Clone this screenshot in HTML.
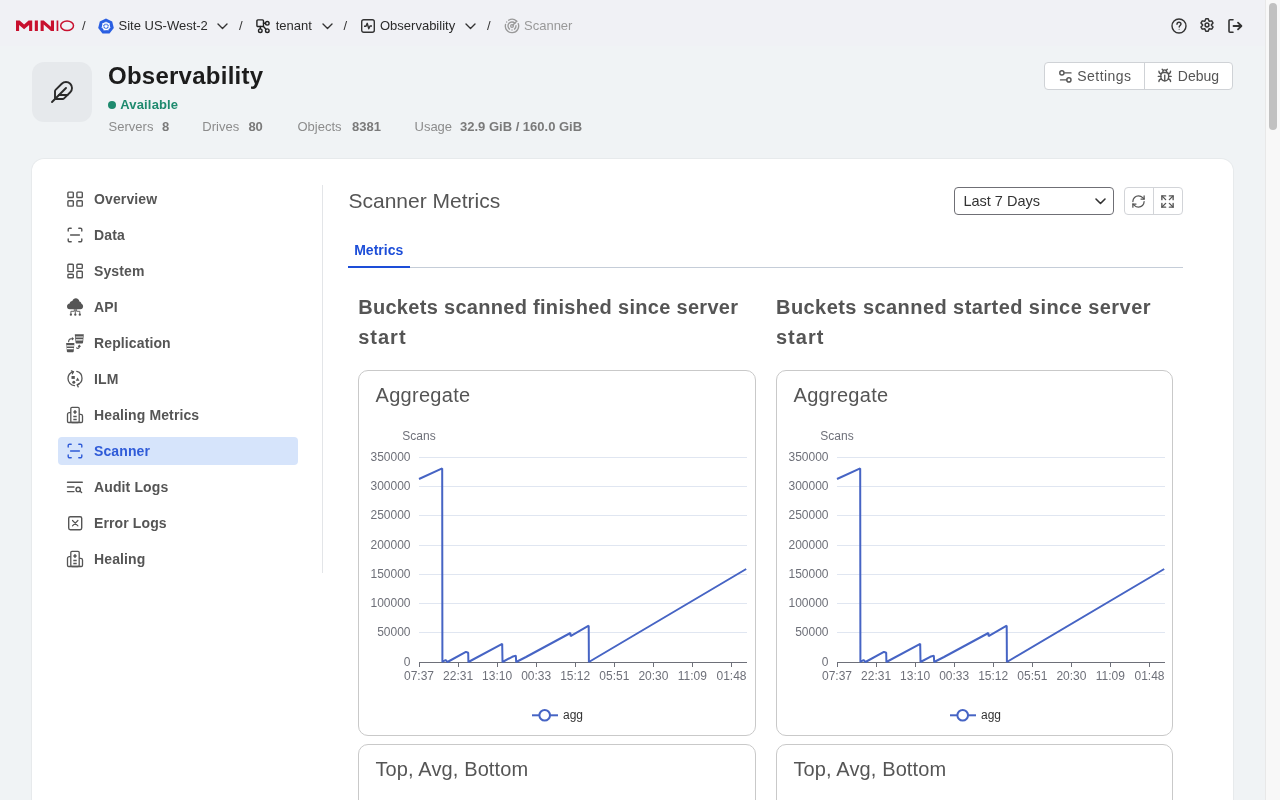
<!DOCTYPE html>
<html><head><meta charset="utf-8">
<style>
*{box-sizing:border-box;margin:0;padding:0}
html,body{width:1280px;height:800px;overflow:hidden;background:#f0f3f5;font-family:"Liberation Sans",sans-serif;}
.t{position:absolute;white-space:nowrap}
.a{position:absolute}
svg{position:absolute;overflow:visible}
svg text{font-family:"Liberation Sans",sans-serif}
#root{position:absolute;left:0;top:0;width:1280px;height:800px;overflow:hidden;will-change:transform;background:#f0f3f5}
</style></head><body><div id="root">
<div class="a" style="left:0;top:0;width:1265px;height:46px;background:#f0f1f5"></div>
<svg style="left:16px;top:20px" width="60" height="12" viewBox="0 0 60 12">
<path fill="#c8102e" d="M0 0.5H3.6L8.1 4.6L12.6 0.5H16.2V11H13.1V5L8.1 9.2L3.1 5V11H0Z"/>
<rect x="18.8" y="0.5" width="3.1" height="10.5" fill="#c8102e"/>
<path fill="#c8102e" d="M24.6 0.5H27.7L34.9 6.8V0.5H38V11H35L27.7 4.6V11H24.6Z"/>
<rect x="40.6" y="0.5" width="1.7" height="10.5" fill="#c8102e"/>
<ellipse cx="51.1" cy="5.75" rx="6.4" ry="4.65" fill="none" stroke="#c8102e" stroke-width="1.5"/>
</svg>
<div class="t" style="left:82px;top:19.00px;font-size:13px;line-height:13px;color:#333;">/</div>
<svg style="left:98px;top:18px" width="16" height="16" viewBox="0 0 16 16">
<path fill="#2a5fe2" d="M8 0.4L14.2 3.4L15.8 10.1L11.5 15.5H4.5L0.2 10.1L1.8 3.4Z"/>
<circle cx="8" cy="8.3" r="3.4" fill="none" stroke="#fff" stroke-width="1.2"/>
<circle cx="8" cy="8.3" r="1.1" fill="#fff"/>
<path stroke="#fff" stroke-width="0.8" d="M8 8.3L8.00 3.70 M8 8.3L11.60 5.43 M8 8.3L12.48 9.32 M8 8.3L10.00 12.44 M8 8.3L6.00 12.44 M8 8.3L3.52 9.32 M8 8.3L4.40 5.43"/>
</svg>
<div class="t" style="left:118.5px;top:19.00px;font-size:13px;line-height:13px;color:#2b2b2b;">Site US-West-2</div>
<svg style="left:216.5px;top:23px" width="11" height="6.5" viewBox="-1 -1 11 6.5"><path d="M0 0L4.5 4.5L9 0" fill="none" stroke="#333" stroke-width="1.4" stroke-linecap="round" stroke-linejoin="round"/></svg>
<div class="t" style="left:239px;top:19.00px;font-size:13px;line-height:13px;color:#333;">/</div>
<svg style="left:256px;top:19px" width="14" height="14" viewBox="0 0 14 14" fill="none" stroke="#222" stroke-width="1.4" stroke-linecap="round">
<rect x="0.9" y="0.9" width="6.6" height="6.6" rx="1"/>
<circle cx="11.3" cy="4.3" r="1.8"/>
<circle cx="4.3" cy="11.7" r="1.8"/>
<circle cx="11.3" cy="11.7" r="1.8"/>
<path d="M7.5 4.3H9.4M4.3 7.5V9.8M7.5 7.5L9.9 10.2"/>
</svg>
<div class="t" style="left:275.75px;top:19.00px;font-size:13px;line-height:13px;color:#2b2b2b;">tenant</div>
<svg style="left:321.5px;top:23px" width="11" height="6.5" viewBox="-1 -1 11 6.5"><path d="M0 0L4.5 4.5L9 0" fill="none" stroke="#333" stroke-width="1.4" stroke-linecap="round" stroke-linejoin="round"/></svg>
<div class="t" style="left:343.5px;top:19.00px;font-size:13px;line-height:13px;color:#333;">/</div>
<svg style="left:361px;top:19px" width="14" height="14" viewBox="0 0 14 14" fill="none" stroke="#333" stroke-width="1.4">
<rect x="0.7" y="0.7" width="12.6" height="12.6" rx="2"/>
<path d="M3 7.3H5L6.2 4.3L7.8 9.7L9 7H11" stroke-linejoin="round"/>
</svg>
<div class="t" style="left:380px;top:19.00px;font-size:13px;line-height:13px;color:#2b2b2b;">Observability</div>
<svg style="left:465px;top:23px" width="11" height="6.5" viewBox="-1 -1 11 6.5"><path d="M0 0L4.5 4.5L9 0" fill="none" stroke="#333" stroke-width="1.4" stroke-linecap="round" stroke-linejoin="round"/></svg>
<div class="t" style="left:487px;top:19.00px;font-size:13px;line-height:13px;color:#333;">/</div>
<svg style="left:503.5px;top:17.5px" width="16" height="16" viewBox="0 0 24 24" fill="none" stroke="#999" stroke-width="2" stroke-linecap="round" stroke-linejoin="round">
<path d="M19.07 4.93A10 10 0 0 0 6.99 3.34"/><path d="M4 6h.01"/><path d="M2.29 9.62A10 10 0 1 0 21.31 8.35"/>
<path d="M16.24 7.76A6 6 0 1 0 8.23 16.67"/><path d="M12 18h.01"/><path d="M17.99 11.66A6 6 0 0 1 15.77 16.67"/>
<circle cx="12" cy="12" r="2"/><path d="m13.41 10.59 5.66-5.66"/>
</svg>
<div class="t" style="left:524px;top:19.00px;font-size:13px;line-height:13px;color:#999;">Scanner</div>
<svg style="left:1171px;top:18px" width="16" height="16" viewBox="0 0 16 16" fill="none" stroke="#333" stroke-width="1.4">
<circle cx="8" cy="8" r="7"/>
<path d="M6 6.2C6 5 7 4.3 8 4.3C9.1 4.3 10 5 10 6.1C10 7.3 8.2 7.6 8.2 9" stroke-linecap="round"/>
<circle cx="8.1" cy="11.3" r="0.5" fill="#333" stroke="none"/>
</svg>
<svg style="left:1200px;top:18px" width="14" height="14" viewBox="0 0 14 14" fill="none" stroke="#333" stroke-width="1.5" stroke-linejoin="round">
<path d="M4.85 3.28 L5.80 0.82 L8.20 0.82 L9.15 3.28 L11.75 2.87 L12.96 4.95 L11.30 7.00 L12.96 9.05 L11.75 11.13 L9.15 10.72 L8.20 13.18 L5.80 13.18 L4.85 10.72 L2.25 11.13 L1.04 9.05 L2.70 7.00 L1.04 4.95 L2.25 2.87Z"/>
<circle cx="7" cy="7" r="1.9"/>
</svg>
<svg style="left:1226px;top:17px" width="18" height="18" viewBox="1226 17 18 18" fill="none" stroke="#333" stroke-width="1.6" stroke-linecap="round" stroke-linejoin="round">
<path d="M1233 19.8H1230A1 1 0 0 0 1229 20.8V31.2A1 1 0 0 0 1230 32.2H1233"/>
<path d="M1233.5 26H1241.2M1238 22.6L1241.4 26L1238 29.4" stroke-width="1.8"/>
</svg>
<div class="a" style="left:1265px;top:0;width:15px;height:800px;background:#f8f8f8;border-left:1px solid #e8e8e8"></div>
<div class="a" style="left:1269px;top:3px;width:8px;height:127px;background:#c1c1c1;border-radius:4px"></div>
<div class="a" style="left:32px;top:62px;width:60px;height:60px;background:#e6e9ec;border-radius:12px"></div>
<svg style="left:50px;top:80px" width="24" height="24" viewBox="0 0 24 24" fill="none" stroke="#2b2b2b" stroke-width="1.9" stroke-linecap="round" stroke-linejoin="round">
<path d="M12.67 19a2 2 0 0 0 1.416-.588l6.154-6.172a6 6 0 0 0-8.49-8.49L5.586 9.914A2 2 0 0 0 5 11.328V18a1 1 0 0 0 1 1z"/>
<path d="M16 8 2 22"/><path d="M17.5 15H9"/>
</svg>
<div class="t" style="left:108px;top:63.88px;font-size:24px;line-height:24px;color:#1c1c1c;font-weight:bold;letter-spacing:0.25px;">Observability</div>
<div class="a" style="left:108px;top:101px;width:8px;height:8px;border-radius:50%;background:#1e8a6e"></div>
<div class="t" style="left:120.3px;top:97.75px;font-size:13px;line-height:13px;color:#1e8a6e;font-weight:bold;letter-spacing:0.15px;">Available</div>
<div class="t" style="left:108.6px;top:120.00px;font-size:13px;line-height:13px;color:#8c8c8c;">Servers</div>
<div class="t" style="left:162px;top:120.00px;font-size:13px;line-height:13px;color:#7a7a7a;font-weight:bold;">8</div>
<div class="t" style="left:202.3px;top:120.00px;font-size:13px;line-height:13px;color:#8c8c8c;">Drives</div>
<div class="t" style="left:248.4px;top:120.00px;font-size:13px;line-height:13px;color:#7a7a7a;font-weight:bold;">80</div>
<div class="t" style="left:297.5px;top:120.00px;font-size:13px;line-height:13px;color:#8c8c8c;">Objects</div>
<div class="t" style="left:352px;top:120.00px;font-size:13px;line-height:13px;color:#7a7a7a;font-weight:bold;">8381</div>
<div class="t" style="left:414.5px;top:120.00px;font-size:13px;line-height:13px;color:#8c8c8c;">Usage</div>
<div class="t" style="left:460px;top:120.00px;font-size:13px;line-height:13px;color:#7a7a7a;font-weight:bold;">32.9 GiB / 160.0 GiB</div>
<div class="a" style="left:1044px;top:62px;width:189px;height:28px;border:1px solid #cfd2d6;border-radius:4px;background:#fff"></div>
<div class="a" style="left:1144px;top:62px;width:1px;height:28px;background:#cfd2d6"></div>
<svg style="left:1056.6px;top:67.7px" width="16.8" height="16.8" viewBox="0 0 24 24" fill="none" stroke="#555" stroke-width="2" stroke-linecap="round" stroke-linejoin="round">
<path d="M20 7h-9"/><path d="M14 17H5"/><circle cx="17" cy="17" r="3"/><circle cx="7" cy="7" r="3"/>
</svg>
<div class="t" style="left:1077.3px;top:69.25px;font-size:14px;line-height:14px;color:#555;letter-spacing:0.45px;">Settings</div>
<svg style="left:1157.25px;top:68px" width="15.5" height="15.5" viewBox="0 0 24 24" fill="none" stroke="#555" stroke-width="2.1" stroke-linecap="round" stroke-linejoin="round">
<path d="m8 2 1.88 1.88"/><path d="M14.12 3.88 16 2"/><path d="M9 7.13v-1a3.003 3.003 0 1 1 6 0v1"/>
<path d="M12 20c-3.3 0-6-2.7-6-6v-3a4 4 0 0 1 4-4h4a4 4 0 0 1 4 4v3c0 3.3-2.7 6-6 6"/><path d="M12 20v-9"/>
<path d="M6.53 9C4.6 8.8 3 7.1 3 5"/><path d="M6 13H2"/><path d="M3 21c0-2.1 1.7-3.9 3.8-4"/>
<path d="M20.97 5c0 2.1-1.6 3.8-3.5 4"/><path d="M22 13h-4"/><path d="M17.2 17c2.1.1 3.8 1.9 3.8 4"/>
</svg>
<div class="t" style="left:1177.8px;top:69.25px;font-size:14px;line-height:14px;color:#555;">Debug</div>
<div class="a" style="left:32px;top:159px;width:1201px;height:700px;background:#fff;border-radius:12px;box-shadow:0 0 0 1px rgba(0,0,0,0.035)"></div>
<div class="a" style="left:58px;top:437px;width:240px;height:28px;background:#d6e4fb;border-radius:4px"></div>
<div class="t" style="left:94px;top:192.15px;font-size:14px;line-height:14px;color:#555;font-weight:bold;letter-spacing:0.12px;">Overview</div>
<div class="t" style="left:94px;top:228.15px;font-size:14px;line-height:14px;color:#555;font-weight:bold;letter-spacing:0.12px;">Data</div>
<div class="t" style="left:94px;top:264.15px;font-size:14px;line-height:14px;color:#555;font-weight:bold;letter-spacing:0.12px;">System</div>
<div class="t" style="left:94px;top:300.15px;font-size:14px;line-height:14px;color:#555;font-weight:bold;letter-spacing:0.12px;">API</div>
<div class="t" style="left:94px;top:336.15px;font-size:14px;line-height:14px;color:#555;font-weight:bold;letter-spacing:0.12px;">Replication</div>
<div class="t" style="left:94px;top:372.15px;font-size:14px;line-height:14px;color:#555;font-weight:bold;letter-spacing:0.12px;">ILM</div>
<div class="t" style="left:94px;top:408.15px;font-size:14px;line-height:14px;color:#555;font-weight:bold;letter-spacing:0.12px;">Healing Metrics</div>
<div class="t" style="left:94px;top:444.15px;font-size:14px;line-height:14px;color:#2f5bd8;font-weight:bold;letter-spacing:0.12px;">Scanner</div>
<div class="t" style="left:94px;top:480.15px;font-size:14px;line-height:14px;color:#555;font-weight:bold;letter-spacing:0.12px;">Audit Logs</div>
<div class="t" style="left:94px;top:516.15px;font-size:14px;line-height:14px;color:#555;font-weight:bold;letter-spacing:0.12px;">Error Logs</div>
<div class="t" style="left:94px;top:552.15px;font-size:14px;line-height:14px;color:#555;font-weight:bold;letter-spacing:0.12px;">Healing</div>
<div class="a" style="left:322px;top:185px;width:1px;height:388px;background:#e3e5e8"></div>
<svg style="left:66px;top:190px" width="18" height="18" viewBox="0 0 18 18" fill="none" stroke="#555" stroke-width="1.4">
<rect x="1.9" y="2.1" width="5.4" height="5.4" rx="0.8"/><rect x="10.9" y="2.1" width="5.4" height="5.4" rx="0.8"/>
<rect x="1.9" y="10.7" width="5.4" height="5.4" rx="0.8"/><rect x="10.9" y="10.7" width="5.4" height="5.4" rx="0.8"/>
</svg>
<svg style="left:66px;top:226px" width="18" height="18" viewBox="0 0 18 18" fill="none" stroke="#555" stroke-width="1.4" stroke-linecap="round">
<path d="M2.2 5V3.6a1.4 1.4 0 0 1 1.4-1.4H5.2M12.8 2.2h1.6a1.4 1.4 0 0 1 1.4 1.4V5M15.8 13v1.4a1.4 1.4 0 0 1-1.4 1.4H12.8M5.2 15.8H3.6a1.4 1.4 0 0 1-1.4-1.4V13M4.6 9H13.4"/>
</svg>
<svg style="left:66px;top:262px" width="18" height="18" viewBox="0 0 18 18" fill="none" stroke="#555" stroke-width="1.4">
<rect x="1.9" y="2.2" width="5.4" height="7.4" rx="0.8"/><rect x="10.9" y="2.2" width="5.4" height="4.2" rx="0.8"/>
<rect x="1.9" y="12.2" width="5.4" height="3.6" rx="0.8"/><rect x="10.9" y="9.2" width="5.4" height="6.6" rx="0.8"/>
</svg>
<svg style="left:66px;top:297px" width="18" height="20" viewBox="0 0 18 20">
<path fill="#555" d="M3.8 12.2C1.8 12.2 1 10.8 1 9.4C1 7.9 2.1 6.7 3.6 6.6C3.9 5.3 4.8 4.3 6.3 4.1C7 2.3 8.3 1.3 9.8 1.3C11.7 1.3 13 2.6 13.4 4.4C14.5 4.7 15.3 5.6 15.5 6.8C16.5 7.2 17.1 8.2 17.1 9.5C17.1 11.1 16 12.2 14.4 12.2Z"/>
<path fill="none" stroke="#555" stroke-width="0.9" d="M9.3 12.2V17.3M8.3 12.2V14.3H4.9V17.3M10.6 12.2V14.3H13.8V17.3"/>
<circle cx="4.9" cy="17.7" r="1.15" fill="#555"/><circle cx="9.3" cy="17.7" r="1.15" fill="#555"/><circle cx="13.8" cy="17.7" r="1.15" fill="#555"/>
</svg>
<svg style="left:66px;top:333px" width="18" height="20" viewBox="0 0 18 20">
<path fill="#555" d="M8.8 1.2H17.8L17 9.8C16.9 10.3 16.6 10.5 16.2 10.5H10.4C10 10.5 9.7 10.3 9.6 9.8Z"/>
<path fill="#fff" d="M9.6 3.4H17L16.9 4.6H9.7ZM9.9 6.2H16.8L16.6 7.5H10Z"/>
<path fill="#555" d="M0.1 10H8.4L7.7 18.6C7.6 19 7.3 19.2 6.9 19.2H1.7C1.3 19.2 1 19 0.9 18.6Z"/>
<path fill="#fff" d="M0.6 12.2H8L7.9 13.4H0.7ZM0.8 15H7.7L7.6 16.2H0.9Z"/>
<path fill="none" stroke="#555" stroke-width="1.1" stroke-linecap="round" stroke-linejoin="round" d="M2.6 8.6C2.7 6.9 3.6 5.9 5 5.7H7.2M6.3 4.8L7.3 5.7L6.3 6.6M10.6 14.9C11.2 15.7 12.8 15.5 13.3 14.3V12.4M12.4 13.3L13.3 12.3L14.2 13.3"/>
</svg>
<svg style="left:66px;top:370px" width="18" height="18" viewBox="0 0 18 18" fill="none" stroke="#555" stroke-width="1.3" stroke-linecap="round">
<path d="M7.2 1.8C4.2 2.6 2 5.3 2 8.6C2 12.3 4.8 15.3 8.5 15.7"/>
<path d="M10.8 1.4C13.8 2.2 16 4.9 16 8.2C16 11.1 14.2 13.6 11.6 14.6"/>
<path d="M5.4 0.9L7.4 1.8L6.4 3.8M12.2 16.9L11.2 14.8L13.2 13.8"/>
<rect x="5.5" y="6" width="3.3" height="2.9" fill="#555" stroke="none"/>
<path d="M11.6 7.5L13.4 10.8H9.8Z" fill="#555" stroke="none"/>
<circle cx="7.8" cy="12.3" r="1.5" fill="#555" stroke="none"/>
</svg>
<svg style="left:66px;top:406px" width="18" height="18" viewBox="0 0 18 18" fill="none" stroke="#555" stroke-width="1.3" stroke-linejoin="round">
<rect x="4.8" y="1.3" width="8.4" height="15.2" rx="1.2"/>
<path d="M4.8 6.6H3.3C2.3 6.6 1.5 7.4 1.5 8.4V15.3C1.5 16 2 16.5 2.7 16.5H15.3C16 16.5 16.5 16 16.5 15.3V10.1C16.5 9.1 15.7 8.3 14.7 8.3H13.2"/>
<path d="M9 4.3V7.7M7.3 6H10.7" stroke-width="1.7"/><path d="M7.3 10.5H10.7M7.3 13.5H10.7"/>
</svg>
<svg style="left:66px;top:442px" width="18" height="18" viewBox="0 0 18 18" fill="none" stroke="#2f5bd8" stroke-width="1.4" stroke-linecap="round">
<path d="M2.2 5V3.6a1.4 1.4 0 0 1 1.4-1.4H5.2M12.8 2.2h1.6a1.4 1.4 0 0 1 1.4 1.4V5M15.8 13v1.4a1.4 1.4 0 0 1-1.4 1.4H12.8M5.2 15.8H3.6a1.4 1.4 0 0 1-1.4-1.4V13M4.6 9H13.4"/>
</svg>
<svg style="left:66px;top:478px" width="18" height="18" viewBox="0 0 18 18" fill="none" stroke="#555" stroke-width="1.4" stroke-linecap="round">
<path d="M1.5 4.3H16.3M1.5 9H8M1.5 13.6H8"/>
<circle cx="12.2" cy="11.4" r="2.2"/><path d="M13.9 13.1L15.6 14.6"/>
</svg>
<svg style="left:66px;top:514px" width="18" height="18" viewBox="0 0 18 18" fill="none" stroke="#555" stroke-width="1.4" stroke-linecap="round">
<rect x="2.7" y="2.7" width="13" height="13" rx="1.6"/><path d="M6.5 6.5L11.9 11.9M11.9 6.5L6.5 11.9" stroke-width="1.2"/>
</svg>
<svg style="left:66px;top:550px" width="18" height="18" viewBox="0 0 18 18" fill="none" stroke="#555" stroke-width="1.3" stroke-linejoin="round">
<rect x="4.8" y="1.3" width="8.4" height="15.2" rx="1.2"/>
<path d="M4.8 6.6H3.3C2.3 6.6 1.5 7.4 1.5 8.4V15.3C1.5 16 2 16.5 2.7 16.5H15.3C16 16.5 16.5 16 16.5 15.3V10.1C16.5 9.1 15.7 8.3 14.7 8.3H13.2"/>
<path d="M9 4.3V7.7M7.3 6H10.7" stroke-width="1.7"/><path d="M7.3 10.5H10.7M7.3 13.5H10.7"/>
</svg>
<div class="t" style="left:348.5px;top:189.82px;font-size:21px;line-height:21px;color:#555;">Scanner Metrics</div>
<div class="a" style="left:954px;top:187px;width:160px;height:28px;border:1px solid #6f6f75;border-radius:4px;background:#fff"></div>
<div class="t" style="left:963.4px;top:194.03px;font-size:14.5px;line-height:14.5px;color:#333;">Last 7 Days</div>
<svg style="left:1094.5px;top:198px" width="11" height="6.5" viewBox="-1 -1 11 6.5"><path d="M0 0L4.5 4.5L9 0" fill="none" stroke="#333" stroke-width="1.6" stroke-linecap="round" stroke-linejoin="round"/></svg>
<div class="a" style="left:1124px;top:187px;width:59px;height:28px;border:1px solid #d2d4d8;border-radius:4px;background:#fff"></div>
<div class="a" style="left:1153px;top:187px;width:1px;height:28px;background:#d2d4d8"></div>
<svg style="left:1131px;top:194px" width="15" height="15" viewBox="0 0 24 24" fill="none" stroke="#555" stroke-width="2" stroke-linecap="round" stroke-linejoin="round">
<path d="M3 12a9 9 0 0 1 9-9 9.75 9.75 0 0 1 6.74 2.74L21 8"/><path d="M21 3v5h-5"/>
<path d="M21 12a9 9 0 0 1-9 9 9.75 9.75 0 0 1-6.74-2.74L3 16"/><path d="M8 16H3v5"/>
</svg>
<svg style="left:1160px;top:194px" width="15" height="15" viewBox="0 0 24 24" fill="none" stroke="#555" stroke-width="2.2" stroke-linecap="round" stroke-linejoin="round">
<path d="M15 3h6v6"/><path d="M21 3l-6 6"/><path d="M9 21H3v-6"/><path d="M3 21l6-6"/>
<path d="M3 9V3h6"/><path d="M3 3l6 6"/><path d="M21 15v6h-6"/><path d="M21 21l-6-6"/>
</svg>
<div class="a" style="left:348px;top:267px;width:835px;height:1px;background:#c5cdd8"></div>
<div class="a" style="left:348px;top:266px;width:62px;height:2px;background:#1d4ed8"></div>
<div class="t" style="left:354.2px;top:242.95px;font-size:14px;line-height:14px;color:#1d4ed8;font-weight:bold;">Metrics</div>
<div class="t" style="left:358.2px;top:296.67px;font-size:20px;line-height:20px;color:#555;font-weight:bold;letter-spacing:0.3px;">Buckets scanned finished since server</div>
<div class="t" style="left:358.2px;top:327.07px;font-size:20px;line-height:20px;color:#555;font-weight:bold;letter-spacing:1.0px;">start</div>
<div class="t" style="left:776px;top:296.67px;font-size:20px;line-height:20px;color:#555;font-weight:bold;letter-spacing:0.44px;">Buckets scanned started since server</div>
<div class="t" style="left:776px;top:327.07px;font-size:20px;line-height:20px;color:#555;font-weight:bold;letter-spacing:1.0px;">start</div>
<div class="a" style="left:358px;top:370px;width:398px;height:366px;border:1px solid #c9c9c9;border-radius:10px"></div>
<div class="t" style="left:375.5px;top:385.07px;font-size:20px;line-height:20px;color:#555;letter-spacing:0.3px;">Aggregate</div>
<div class="a" style="left:358px;top:744px;width:398px;height:120px;border:1px solid #c9c9c9;border-radius:10px"></div>
<div class="t" style="left:375.5px;top:758.87px;font-size:20px;line-height:20px;color:#555;letter-spacing:0.12px;">Top, Avg, Bottom</div>
<div class="a" style="left:776px;top:370px;width:397px;height:366px;border:1px solid #c9c9c9;border-radius:10px"></div>
<div class="t" style="left:793.5px;top:385.07px;font-size:20px;line-height:20px;color:#555;letter-spacing:0.3px;">Aggregate</div>
<div class="a" style="left:776px;top:744px;width:397px;height:120px;border:1px solid #c9c9c9;border-radius:10px"></div>
<div class="t" style="left:793.5px;top:758.87px;font-size:20px;line-height:20px;color:#555;letter-spacing:0.12px;">Top, Avg, Bottom</div>
<svg style="left:0;top:0" width="1280" height="800">
<line x1="419" y1="632.5" x2="747" y2="632.5" stroke="#E0E6F1" stroke-width="1"/>
<line x1="419" y1="603.5" x2="747" y2="603.5" stroke="#E0E6F1" stroke-width="1"/>
<line x1="419" y1="574.5" x2="747" y2="574.5" stroke="#E0E6F1" stroke-width="1"/>
<line x1="419" y1="545.5" x2="747" y2="545.5" stroke="#E0E6F1" stroke-width="1"/>
<line x1="419" y1="515.5" x2="747" y2="515.5" stroke="#E0E6F1" stroke-width="1"/>
<line x1="419" y1="486.5" x2="747" y2="486.5" stroke="#E0E6F1" stroke-width="1"/>
<line x1="419" y1="457.5" x2="747" y2="457.5" stroke="#E0E6F1" stroke-width="1"/>
<text x="410.5" y="666.3" text-anchor="end" font-size="12" fill="#6E7079">0</text>
<text x="410.5" y="636.3" text-anchor="end" font-size="12" fill="#6E7079">50000</text>
<text x="410.5" y="607.3" text-anchor="end" font-size="12" fill="#6E7079">100000</text>
<text x="410.5" y="578.3" text-anchor="end" font-size="12" fill="#6E7079">150000</text>
<text x="410.5" y="549.3" text-anchor="end" font-size="12" fill="#6E7079">200000</text>
<text x="410.5" y="519.3" text-anchor="end" font-size="12" fill="#6E7079">250000</text>
<text x="410.5" y="490.3" text-anchor="end" font-size="12" fill="#6E7079">300000</text>
<text x="410.5" y="461.3" text-anchor="end" font-size="12" fill="#6E7079">350000</text>
<line x1="419" y1="662.5" x2="747" y2="662.5" stroke="#6E7079" stroke-width="1"/>
<line x1="419.5" y1="662" x2="419.5" y2="667" stroke="#6E7079" stroke-width="1"/>
<text x="419.0" y="680" text-anchor="middle" font-size="12" fill="#6E7079">07:37</text>
<line x1="458.5" y1="662" x2="458.5" y2="667" stroke="#6E7079" stroke-width="1"/>
<text x="458.1" y="680" text-anchor="middle" font-size="12" fill="#6E7079">22:31</text>
<line x1="497.5" y1="662" x2="497.5" y2="667" stroke="#6E7079" stroke-width="1"/>
<text x="497.1" y="680" text-anchor="middle" font-size="12" fill="#6E7079">13:10</text>
<line x1="536.5" y1="662" x2="536.5" y2="667" stroke="#6E7079" stroke-width="1"/>
<text x="536.2" y="680" text-anchor="middle" font-size="12" fill="#6E7079">00:33</text>
<line x1="575.5" y1="662" x2="575.5" y2="667" stroke="#6E7079" stroke-width="1"/>
<text x="575.2" y="680" text-anchor="middle" font-size="12" fill="#6E7079">15:12</text>
<line x1="614.5" y1="662" x2="614.5" y2="667" stroke="#6E7079" stroke-width="1"/>
<text x="614.3" y="680" text-anchor="middle" font-size="12" fill="#6E7079">05:51</text>
<line x1="653.5" y1="662" x2="653.5" y2="667" stroke="#6E7079" stroke-width="1"/>
<text x="653.4" y="680" text-anchor="middle" font-size="12" fill="#6E7079">20:30</text>
<line x1="692.5" y1="662" x2="692.5" y2="667" stroke="#6E7079" stroke-width="1"/>
<text x="692.4" y="680" text-anchor="middle" font-size="12" fill="#6E7079">11:09</text>
<line x1="731.5" y1="662" x2="731.5" y2="667" stroke="#6E7079" stroke-width="1"/>
<text x="731.5" y="680" text-anchor="middle" font-size="12" fill="#6E7079">01:48</text>
<text x="419" y="440" text-anchor="middle" font-size="12" fill="#6E7079">Scans</text>
<polyline points="419.0,479.0 442.2,468.4 442.4,662.0 445.5,660.0 447.5,662.0 465.9,651.9 468.2,652.8 468.4,662.0 502.2,643.8 502.5,662.0 512.2,656.8 515.8,655.6 516.2,662.0 526.0,657.0 570.4,633.0 570.6,636.2 588.7,625.7 588.9,662.0 746.2,569.0" fill="none" stroke="#4664c4" stroke-width="2" stroke-linejoin="bevel"/>
<line x1="532" y1="715.3" x2="558" y2="715.3" stroke="#4664c4" stroke-width="2"/>
<circle cx="544.7" cy="715.3" r="5.3" fill="#fff" stroke="#4664c4" stroke-width="2"/>
<text x="563" y="719" font-size="12" fill="#333">agg</text>
<line x1="837" y1="632.5" x2="1165" y2="632.5" stroke="#E0E6F1" stroke-width="1"/>
<line x1="837" y1="603.5" x2="1165" y2="603.5" stroke="#E0E6F1" stroke-width="1"/>
<line x1="837" y1="574.5" x2="1165" y2="574.5" stroke="#E0E6F1" stroke-width="1"/>
<line x1="837" y1="545.5" x2="1165" y2="545.5" stroke="#E0E6F1" stroke-width="1"/>
<line x1="837" y1="515.5" x2="1165" y2="515.5" stroke="#E0E6F1" stroke-width="1"/>
<line x1="837" y1="486.5" x2="1165" y2="486.5" stroke="#E0E6F1" stroke-width="1"/>
<line x1="837" y1="457.5" x2="1165" y2="457.5" stroke="#E0E6F1" stroke-width="1"/>
<text x="828.5" y="666.3" text-anchor="end" font-size="12" fill="#6E7079">0</text>
<text x="828.5" y="636.3" text-anchor="end" font-size="12" fill="#6E7079">50000</text>
<text x="828.5" y="607.3" text-anchor="end" font-size="12" fill="#6E7079">100000</text>
<text x="828.5" y="578.3" text-anchor="end" font-size="12" fill="#6E7079">150000</text>
<text x="828.5" y="549.3" text-anchor="end" font-size="12" fill="#6E7079">200000</text>
<text x="828.5" y="519.3" text-anchor="end" font-size="12" fill="#6E7079">250000</text>
<text x="828.5" y="490.3" text-anchor="end" font-size="12" fill="#6E7079">300000</text>
<text x="828.5" y="461.3" text-anchor="end" font-size="12" fill="#6E7079">350000</text>
<line x1="837" y1="662.5" x2="1165" y2="662.5" stroke="#6E7079" stroke-width="1"/>
<line x1="837.5" y1="662" x2="837.5" y2="667" stroke="#6E7079" stroke-width="1"/>
<text x="837.0" y="680" text-anchor="middle" font-size="12" fill="#6E7079">07:37</text>
<line x1="876.5" y1="662" x2="876.5" y2="667" stroke="#6E7079" stroke-width="1"/>
<text x="876.1" y="680" text-anchor="middle" font-size="12" fill="#6E7079">22:31</text>
<line x1="915.5" y1="662" x2="915.5" y2="667" stroke="#6E7079" stroke-width="1"/>
<text x="915.1" y="680" text-anchor="middle" font-size="12" fill="#6E7079">13:10</text>
<line x1="954.5" y1="662" x2="954.5" y2="667" stroke="#6E7079" stroke-width="1"/>
<text x="954.2" y="680" text-anchor="middle" font-size="12" fill="#6E7079">00:33</text>
<line x1="993.5" y1="662" x2="993.5" y2="667" stroke="#6E7079" stroke-width="1"/>
<text x="993.2" y="680" text-anchor="middle" font-size="12" fill="#6E7079">15:12</text>
<line x1="1032.5" y1="662" x2="1032.5" y2="667" stroke="#6E7079" stroke-width="1"/>
<text x="1032.3" y="680" text-anchor="middle" font-size="12" fill="#6E7079">05:51</text>
<line x1="1071.5" y1="662" x2="1071.5" y2="667" stroke="#6E7079" stroke-width="1"/>
<text x="1071.4" y="680" text-anchor="middle" font-size="12" fill="#6E7079">20:30</text>
<line x1="1110.5" y1="662" x2="1110.5" y2="667" stroke="#6E7079" stroke-width="1"/>
<text x="1110.4" y="680" text-anchor="middle" font-size="12" fill="#6E7079">11:09</text>
<line x1="1149.5" y1="662" x2="1149.5" y2="667" stroke="#6E7079" stroke-width="1"/>
<text x="1149.5" y="680" text-anchor="middle" font-size="12" fill="#6E7079">01:48</text>
<text x="837" y="440" text-anchor="middle" font-size="12" fill="#6E7079">Scans</text>
<polyline points="837.0,479.0 860.2,468.4 860.4,662.0 863.5,660.0 865.5,662.0 883.9,651.9 886.2,652.8 886.4,662.0 920.2,643.8 920.5,662.0 930.2,656.8 933.8,655.6 934.2,662.0 944.0,657.0 988.4,633.0 988.6,636.2 1006.7,625.7 1006.9,662.0 1164.2,569.0" fill="none" stroke="#4664c4" stroke-width="2" stroke-linejoin="bevel"/>
<line x1="950" y1="715.3" x2="976" y2="715.3" stroke="#4664c4" stroke-width="2"/>
<circle cx="962.7" cy="715.3" r="5.3" fill="#fff" stroke="#4664c4" stroke-width="2"/>
<text x="981" y="719" font-size="12" fill="#333">agg</text>
</svg>
</div></body></html>
